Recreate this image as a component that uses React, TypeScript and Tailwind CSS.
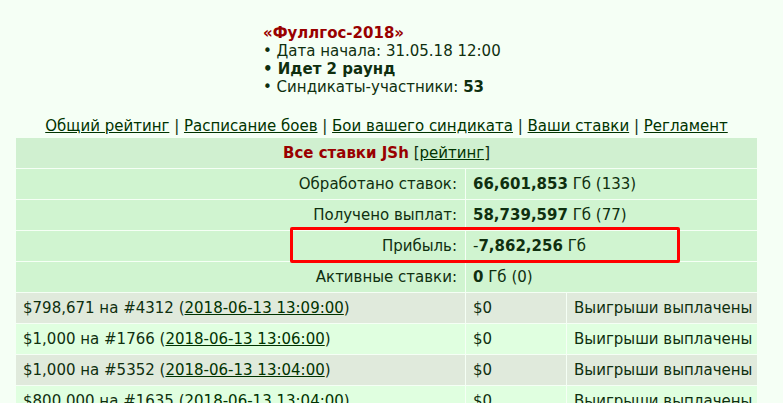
import React from "react";

const rows = [
  { bet: "$798,671", game: "#4312", time: "2018-06-13 13:09:00", win: "$0", status: "Выигрыши выплачены" },
  { bet: "$1,000", game: "#1766", time: "2018-06-13 13:06:00", win: "$0", status: "Выигрыши выплачены" },
  { bet: "$1,000", game: "#5352", time: "2018-06-13 13:04:00", win: "$0", status: "Выигрыши выплачены" },
  { bet: "$800,000", game: "#1635", time: "2018-06-13 13:04:00", win: "$0", status: "Выигрыши выплачены" },
];

const stats = [
  { label: "Обработано ставок:", value: "66,601,853", tail: "Гб (133)" },
  { label: "Получено выплат:", value: "58,739,597", tail: "Гб (77)" },
  { label: "Прибыль:", value: "7,862,256", tail: "Гб", minus: true },
  { label: "Активные ставки:", value: "0", tail: "Гб (0)" },
];

const links = ["Общий рейтинг", "Расписание боев", "Бои вашего синдиката", "Ваши ставки", "Регламент"];

export default function App() {
  return (
    <div className="h-[403px] bg-[#f5fff5] text-[15px] leading-[18px] text-[#0f2f0f] font-['DejaVu_Sans',Verdana,sans-serif] overflow-hidden">
      <div className="pt-[24px] pl-[263px]">
        <div className="font-bold text-[#990000]">«Фуллгос-2018»</div>
        <div>• Дата начала: 31.05.18 12:00</div>
        <div className="font-bold">• Идет 2 раунд</div>
        <div>
          • Синдикаты-участники: <b>53</b>
        </div>
      </div>

      <div className="mt-[21px] w-[773px] text-center">
        {links.map((l, i) => (
          <span key={l}>
            {i > 0 && " | "}
            <a href="#" className="underline text-[#003300]">
              {l}
            </a>
          </span>
        ))}
      </div>

      <div className="relative w-[741px] ml-[16px] mt-[3px]">
        <div className="grid w-[741px] grid-cols-[449px_100px_190px] gap-[1px] bg-[#f5fff5]">
          <div className="col-span-3 h-[30px] flex items-center justify-center bg-[#d0f0d0]">
            <span>
              <b className="text-[#990000]">Все ставки JSh</b>{" "}
              [<a href="#" className="underline text-[#003300]">рейтинг</a>]
            </span>
          </div>
          {stats.map((s) => (
            <React.Fragment key={s.label}>
              <div className="h-[30px] flex items-center justify-end pr-[8px] bg-[#d0f4d0]">{s.label}</div>
              <div className="col-span-2 flex items-center pl-[7px] bg-[#d0f4d0]">
                <span>
                  {s.minus && "-"}
                  <b>{s.value}</b> {s.tail}
                </span>
              </div>
            </React.Fragment>
          ))}
          {rows.map((r, i) => {
            const bg = i % 2 === 0 ? "bg-[#e0eadc]" : "bg-[#e0ffe0]";
            return (
              <React.Fragment key={i}>
                <div className={`h-[30px] flex items-center pl-[7px] whitespace-nowrap ${bg}`}>
                  <span>
                    {r.bet} на {r.game} (
                    <a href="#" className="underline text-[#003300]">
                      {r.time}
                    </a>
                    )
                  </span>
                </div>
                <div className={`flex items-center pl-[7px] ${bg}`}>{r.win}</div>
                <div className={`flex items-center pl-[7px] whitespace-nowrap overflow-hidden ${bg}`}>{r.status}</div>
              </React.Fragment>
            );
          })}
        </div>
        <div className="absolute left-[274px] top-[89px] w-[390px] h-[36px] border-[3px] border-[#ff0000] rounded-[2px] pointer-events-none" />
      </div>
    </div>
  );
}
